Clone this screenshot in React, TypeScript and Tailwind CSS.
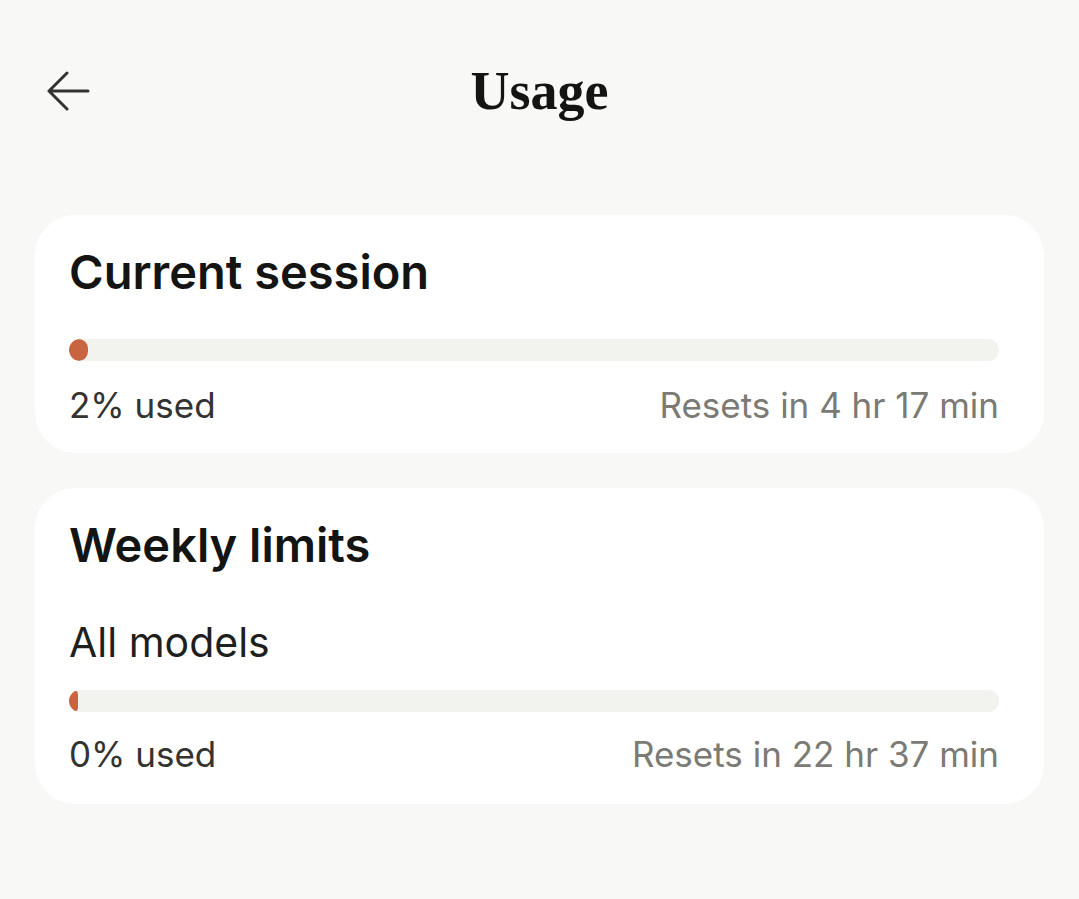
import { ReactNode } from 'react'

const sans = { fontFamily: 'Inter, "Noto Sans", sans-serif' }
const serif = { fontFamily: '"Liberation Serif", "DejaVu Serif", serif' }

function BackArrow() {
  return (
    <svg width="44" height="40" viewBox="0 0 44 40" fill="none" className="text-[#333331]">
      <path
        d="M42 20H3M21 2L3 20L21 38"
        stroke="currentColor"
        strokeWidth="3"
        strokeLinecap="round"
        strokeLinejoin="round"
      />
    </svg>
  )
}

function Bar({ pct, min }: { pct: number; min: number }) {
  return (
    <div className="h-[22px] w-full overflow-hidden rounded-full bg-[#f2f2ee]">
      <div
        className="h-full rounded-full bg-[#c8643f]"
        style={{ width: `max(${pct}%, ${min}px)` }}
      />
    </div>
  )
}

function Row({ used, resets }: { used: string; resets: string }) {
  return (
    <div className="flex items-center justify-between text-[35px] leading-none">
      <span className="text-[#333331]">{used}</span>
      <span className="text-[#7b7a74]">{resets}</span>
    </div>
  )
}

function Card({ children }: { children: ReactNode }) {
  return <div className="rounded-[40px] bg-white pl-[34px] pr-[45px]">{children}</div>
}

export default function App() {
  return (
    <div className="min-h-screen w-full bg-[#f8f8f6] px-[35px] pt-[66px]" style={sans}>
      <div className="relative flex h-[50px] items-center justify-center">
        <div className="absolute left-[11px] top-[5px]">
          <BackArrow />
        </div>
        <h1 className="text-[54px] font-bold leading-none text-[#141413]" style={serif}>
          Usage
        </h1>
      </div>

      <div className="mt-[99px] flex flex-col gap-[35px]">
        <Card>
          <div className="pb-[30px] pt-[33px]">
            <h2 className="text-[47px] font-semibold leading-none text-[#141413]">Current session</h2>
            <div className="mt-[44px]">
              <Bar pct={2} min={19} />
            </div>
            <div className="mt-[27px]">
              <Row used="2% used" resets="Resets in 4 hr 17 min" />
            </div>
          </div>
        </Card>

        <Card>
          <div className="pb-[32px] pt-[33px]">
            <h2 className="text-[47px] font-semibold leading-none text-[#141413]">Weekly limits</h2>
            <div className="mt-[54px] text-[41px] leading-none text-[#1f1f1e]">All models</div>
            <div className="mt-[27px]">
              <Bar pct={0} min={9} />
            </div>
            <div className="mt-[25px]">
              <Row used="0% used" resets="Resets in 22 hr 37 min" />
            </div>
          </div>
        </Card>
      </div>
    </div>
  )
}
